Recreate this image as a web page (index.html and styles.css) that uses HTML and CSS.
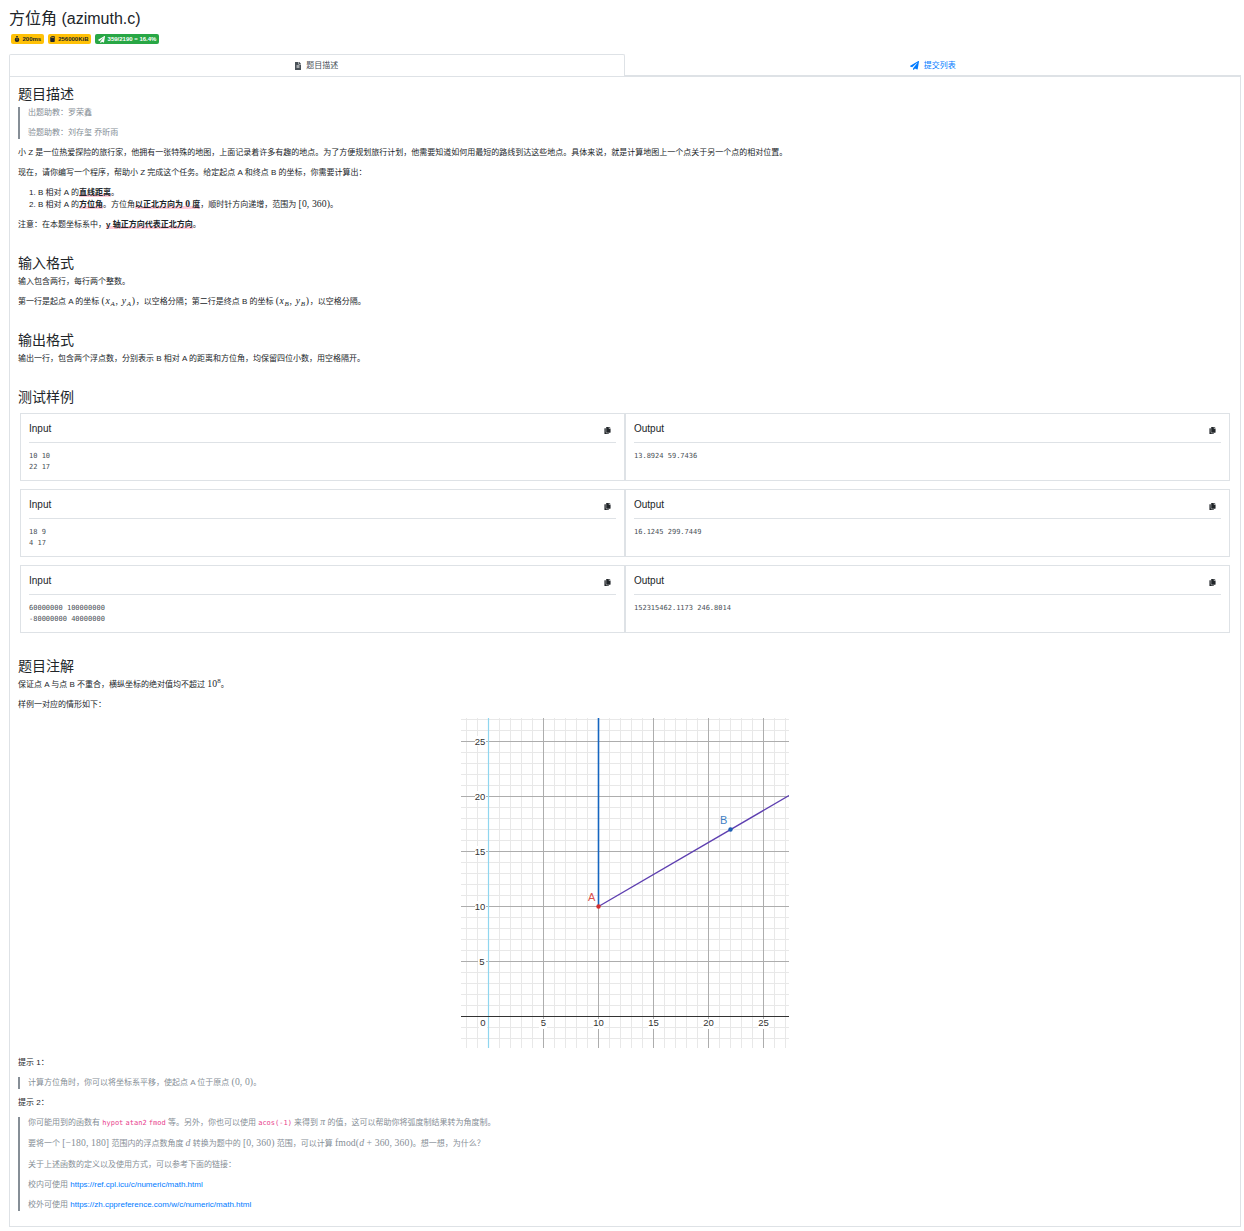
FILE: index.html
```html
<!DOCTYPE html>
<html lang="en">
<head>
  <meta charset="UTF-8" />
  <title>方位角 (azimuth.c)</title>
  <link rel="stylesheet" href="styles.css">
</head>
<body>
  <svg class="icon-defs" width="0" height="0">
    <symbol id="i-plane" viewBox="0 0 512 512"><path d="M476 3.2L12.5 270.6c-18.1 10.4-15.8 35.6 2.2 43.2L121 358.4l287.3-253.2c5.5-4.9 13.3 2.6 8.6 8.3L176 407v80.5c0 23.6 28.5 32.9 42.5 15.8L282 426l124.6 52.2c14.2 6 30.4-2.9 33-18.2l72-432C515 7.8 493.3-6.8 476 3.2z"/></symbol>
    <symbol id="i-copy" viewBox="0 0 448 512"><path d="M320 448v40c0 13.255-10.745 24-24 24H24c-13.255 0-24-10.745-24-24V120c0-13.255 10.745-24 24-24h72v296c0 30.879 25.121 56 56 56h168zm0-344V0H152c-13.255 0-24 10.745-24 24v368c0 13.255 10.745 24 24 24h272c13.255 0 24-10.745 24-24V128H344c-13.2 0-24-10.8-24-24zm120.971-31.029L375.029 7.029A24 24 0 0 0 358.059 0H352v96h96v-6.059a24 24 0 0 0-7.029-16.97z"/></symbol>
    <symbol id="i-file" viewBox="0 0 384 512"><path d="M224 136V0H24C10.7 0 0 10.7 0 24v464c0 13.3 10.7 24 24 24h336c13.3 0 24-10.7 24-24V160H248c-13.2 0-24-10.8-24-24zm64 236c0 6.6-5.4 12-12 12H108c-6.6 0-12-5.4-12-12v-8c0-6.6 5.4-12 12-12h168c6.6 0 12 5.4 12 12v8zm0-64c0 6.6-5.4 12-12 12H108c-6.6 0-12-5.4-12-12v-8c0-6.6 5.4-12 12-12h168c6.6 0 12 5.4 12 12v8zm0-72v8c0 6.6-5.4 12-12 12H108c-6.6 0-12-5.4-12-12v-8c0-6.6 5.4-12 12-12h168c6.6 0 12 5.4 12 12zm96-114.1v6.1H256V0h6.1c6.4 0 12.5 2.5 17 7l97.9 98c4.5 4.5 7 10.6 7 16.9z"/></symbol>
    <symbol id="i-watch" viewBox="0 0 448 512"><path d="M224 120a196 196 0 1 0 0 392 196 196 0 0 0 0-392zm24 226a24 24 0 0 1-48 0V220a24 24 0 0 1 48 0zM160 0h128a24 24 0 0 1 24 24v24a24 24 0 0 1-24 24h-32v32h-64V72h-32a24 24 0 0 1-24-24V24a24 24 0 0 1 24-24z"/></symbol>
    <symbol id="i-card" viewBox="0 0 384 512"><path d="M320 0H128L0 128v320c0 35.300 28.700 64 64 64h256c35.300 0 64-28.700 64-64V64c0-35.300-28.700-64-64-64zM160 160h-48V64h48zm80 0h-48V64h48zm80 0h-48V64h48z"/></symbol>
  </svg>

  <div class="page">
    <h1 class="title">方位角 (azimuth.c)</h1>
    <div class="badges">
      <span class="badge badge-warn"><svg class="ic ic-watch"><use href="#i-watch"/></svg>200ms</span>
      <span class="badge badge-warn"><svg class="ic ic-card"><use href="#i-card"/></svg>256000KiB</span>
      <span class="badge badge-ok"><svg class="ic ic-plane"><use href="#i-plane"/></svg>359/2190 = 16.4%</span>
    </div>

    <div class="tabs">
      <div class="tab tab-active"><svg class="ic"><use href="#i-file"/></svg>题目描述</div>
      <div class="tab tab-link"><svg class="ic"><use href="#i-plane"/></svg>提交列表</div>
    </div>

    <div class="panel">
      <section class="sec sec-first">
        <h2>题目描述</h2>
        <blockquote>
          <p>出题助教：罗荣鑫</p>
          <p>验题助教：刘存玺 乔昕雨</p>
        </blockquote>
        <p>小 Z 是一位热爱探险的旅行家，他拥有一张特殊的地图，上面记录着许多有趣的地点。为了方便规划旅行计划，他需要知道如何用最短的路线到达这些地点。具体来说，就是计算地图上一个点关于另一个点的相对位置。</p>
        <p>现在，请你编写一个程序，帮助小 Z 完成这个任务。给定起点 A 和终点 B 的坐标，你需要计算出：</p>
        <ol>
          <li>B 相对 A 的<strong class="hl">直线距离</strong>。</li>
          <li>B 相对 A 的<strong class="hl">方位角</strong>。方位角<strong class="hl">以正北方向为 <span class="math">0</span> 度</strong>，顺时针方向递增，范围为 <span class="math">[0, 360)</span>。</li>
        </ol>
        <p>注意：在本题坐标系中，<strong class="hl">y 轴正方向代表正北方向</strong>。</p>
      </section>

      <section class="sec">
        <h2>输入格式</h2>
        <p>输入包含两行，每行两个整数。</p>
        <p>第一行是起点 A 的坐标 <span class="math math-wide">(<i>x<sub>A</sub></i>, <i>y<sub>A</sub></i>)</span>，以空格分隔；第二行是终点 B 的坐标 <span class="math math-wide">(<i>x<sub>B</sub></i>, <i>y<sub>B</sub></i>)</span>，以空格分隔。</p>
      </section>

      <section class="sec">
        <h2>输出格式</h2>
        <p>输出一行，包含两个浮点数，分别表示 B 相对 A 的距离和方位角，均保留四位小数，用空格隔开。</p>
      </section>

      <section class="sec">
        <h2>测试样例</h2>
        <div class="samples">
          <div class="sample-row">
            <div class="sample">
              <div class="sample-head">Input<svg class="ic-copy"><use href="#i-copy"/></svg></div>
              <pre>10 10
22 17</pre>
            </div>
            <div class="sample">
              <div class="sample-head">Output<svg class="ic-copy"><use href="#i-copy"/></svg></div>
              <pre>13.8924 59.7436</pre>
            </div>
          </div>
          <div class="sample-row">
            <div class="sample">
              <div class="sample-head">Input<svg class="ic-copy"><use href="#i-copy"/></svg></div>
              <pre>18 9
4 17</pre>
            </div>
            <div class="sample">
              <div class="sample-head">Output<svg class="ic-copy"><use href="#i-copy"/></svg></div>
              <pre>16.1245 299.7449</pre>
            </div>
          </div>
          <div class="sample-row">
            <div class="sample">
              <div class="sample-head">Input<svg class="ic-copy"><use href="#i-copy"/></svg></div>
              <pre>60000000 100000000
-80000000 40000000</pre>
            </div>
            <div class="sample">
              <div class="sample-head">Output<svg class="ic-copy"><use href="#i-copy"/></svg></div>
              <pre>152315462.1173 246.8014</pre>
            </div>
          </div>
        </div>
      </section>

      <section class="sec sec-notes">
        <h2>题目注解</h2>
        <p>保证点 A 与点 B 不重合，横纵坐标的绝对值均不超过 <span class="math">10<sup>8</sup></span>。</p>
        <p>样例一对应的情形如下：</p>
        <div class="figure">
          <svg class="plot" width="328" height="330" viewBox="0 0 328 330">
            <defs>
              <pattern id="minor" width="11" height="11" x="27" y="298" patternUnits="userSpaceOnUse">
                <path d="M.5 0V11M0 .5H11" stroke="#e8e8e8" fill="none"/>
              </pattern>
              <pattern id="major" width="55" height="55" x="27" y="298" patternUnits="userSpaceOnUse">
                <path d="M.5 0V55M0 .5H55" stroke="#adadad" fill="none"/>
              </pattern>
            </defs>
            <rect width="328" height="330" fill="url(#minor)"/>
            <rect width="328" height="330" fill="url(#major)"/>
            <path d="M27.500 0V330" stroke="#8fd6ef" stroke-width="1.200"/>
            <path d="M0 298.500H328" stroke="#333" stroke-width="1.200"/>
            <g class="tick-bg">
              <rect x="14" y="18" width="11" height="10"/>
              <rect x="14" y="73" width="11" height="10"/>
              <rect x="14" y="128" width="11" height="10"/>
              <rect x="14" y="183" width="11" height="10"/>
              <rect x="17" y="238" width="8" height="10"/>
              <rect x="18" y="301" width="8" height="10"/>
              <rect x="78" y="301" width="8" height="10"/>
              <rect x="132" y="301" width="11" height="10"/>
              <rect x="187" y="301" width="11" height="10"/>
              <rect x="242" y="301" width="11" height="10"/>
              <rect x="297" y="301" width="11" height="10"/>
            </g>
            <g class="ticks">
              <text x="19" y="26.500">25</text>
              <text x="19" y="81.500">20</text>
              <text x="19" y="136.500">15</text>
              <text x="19" y="191.500">10</text>
              <text x="21" y="246.500">5</text>
              <text x="22" y="307.500">0</text>
              <text x="82.500" y="307.500">5</text>
              <text x="137.500" y="307.500">10</text>
              <text x="192.500" y="307.500">15</text>
              <text x="247.500" y="307.500">20</text>
              <text x="302.500" y="307.500">25</text>
            </g>
            <path d="M137.500 0V188.500" stroke="#1565c0" stroke-width="1.600"/>
            <path d="M137.500 188.500L328 77.500" stroke="#5e3fb0" stroke-width="1.400"/>
            <circle cx="137.500" cy="188.500" r="2.200" fill="#d32f2f"/>
            <circle cx="269.500" cy="111.500" r="2.200" fill="#1e5fb4"/>
            <text class="pt pt-a" x="127" y="183">A</text>
            <text class="pt pt-b" x="259" y="106">B</text>
          </svg>
        </div>
        <p>提示 1：</p>
        <blockquote>
          <p>计算方位角时，你可以将坐标系平移，使起点 A 位于原点 <span class="math">(0, 0)</span>。</p>
        </blockquote>
        <p>提示 2：</p>
        <blockquote>
          <p class="line-tall">你可能用到的函数有 <code>hypot</code> <code>atan2</code> <code>fmod</code> 等。另外，你也可以使用 <code>acos(-1)</code> 来得到 <span class="math"><i>π</i></span> 的值，这可以帮助你将弧度制结果转为角度制。</p>
          <p class="line-tall">要将一个 <span class="math">[−180, 180]</span> 范围内的浮点数角度 <span class="math"><i>d</i></span> 转换为题中的 <span class="math">[0, 360)</span> 范围，可以计算 <span class="math">fmod(<i>d</i> + 360, 360)</span>。想一想，为什么？</p>
          <p>关于上述函数的定义以及使用方式，可以参考下面的链接：</p>
          <p>校内可使用 <a href="#">https://ref.cpl.icu/c/numeric/math.html</a></p>
          <p>校外可使用 <a href="#">https://zh.cppreference.com/w/c/numeric/math.html</a></p>
        </blockquote>
      </section>
    </div>
  </div>
</body>
</html>
```

FILE: styles.css
```css
body {
  margin: 0;
  background: #fff;
  color: #212529;
  font-family: "Liberation Sans", "Noto Sans CJK SC", sans-serif;
  font-size: 8px;
  line-height: 12px;
}

.icon-defs {
  display: block;
  height: 0;
}

.page {
  width: 1232px;
  margin-left: 9px;
  padding: 9px 0 4px;
}

.title {
  margin: 0;
  font-size: 16px;
  font-weight: 400;
  line-height: 19px;
}

.badges {
  display: flex;
  gap: 4px;
  margin: 6px 0 10px 2px;
}

.badge {
  display: flex;
  align-items: center;
  height: 10px;
  padding: 0 2.500px;
  border-radius: 2px;
  font-size: 6px;
  font-weight: 700;
  line-height: 10px;
}

.badge .ic {
  height: 6px;
  margin: 0 3px 0 0;
  fill: currentColor;
}

.badge .ic-watch {
  width: 6px;
}

.badge .ic-card {
  width: 5px;
}

.badge .ic-plane {
  width: 7px;
  height: 7px;
}

.badge-warn {
  background: #ffc107;
}

.badge-ok {
  background: #28a745;
  color: #fff;
}

.tabs {
  display: flex;
  height: 22px;
}

.tab {
  flex: 1;
  display: flex;
  align-items: center;
  justify-content: center;
  font-size: 8px;
}

.tab .ic {
  width: 6px;
  height: 8px;
  margin-right: 5px;
  fill: currentColor;
}

.tab-active {
  flex: 0 0 613.500px;
  border: 1px solid #dee2e6;
  border-bottom: 0;
  border-radius: 2px 2px 0 0;
  color: #495057;
}

.tab-link {
  padding-top: 2px;
  border-bottom: 1px solid #dee2e6;
  color: #007bff;
}

.tab-link .ic {
  width: 9px;
  height: 9px;
}

.panel {
  padding: 9px 8px 7px;
  border: 1px solid #dee2e6;
}

.sec {
  margin-top: 24px;
}

.sec-first {
  margin-top: 0;
}

.sec-notes {
  margin-top: 25px;
}

h2 {
  margin: 0 0 4px;
  font-size: 14px;
  font-weight: 400;
  line-height: 17px;
}

p {
  margin: 0 0 8px;
}

.line-tall {
  min-height: 13px;
}

blockquote {
  margin: 0 0 8px;
  padding-left: 8px;
  border-left: 2px solid #868e96;
  color: #868e96;
}

blockquote p:last-child {
  margin-bottom: 0;
}

ol {
  margin: 0 0 8px;
  padding-left: 20px;
}

.hl {
  font-weight: 700;
  background: linear-gradient(transparent 72%, #ffccd8 72%);
}

.math {
  font-family: "Liberation Serif", "Noto Sans CJK SC", serif;
  font-size: 9.700px;
  line-height: 0;
  letter-spacing: 0.100px;
}

.math-wide {
  letter-spacing: 0.700px;
}

.math sub,
.math sup {
  font-size: 7px;
  line-height: 0;
}

.math sub {
  vertical-align: -2px;
}

code {
  color: #e83e8c;
  font-family: "DejaVu Sans Mono", monospace;
  font-size: 7px;
  line-height: 0;
}

a {
  color: #007bff;
  text-decoration: none;
}

.samples {
  margin-bottom: 8px;
  padding: 3px 2px 0;
}

.sample-row {
  display: flex;
  margin-bottom: 8px;
}

.sample-row:last-child {
  margin-bottom: 0;
}

.sample {
  flex: 1;
  min-width: 0;
  padding: 8px 8px 7px;
  border: 1px solid #dee2e6;
}

.sample-head {
  display: flex;
  justify-content: space-between;
  padding-bottom: 7px;
  border-bottom: 1px solid #dee2e6;
  font-size: 10px;
  line-height: 13px;
}

.ic-copy {
  width: 7px;
  height: 7px;
  margin: 5px 5px 0 0;
  fill: #212529;
}

pre {
  margin: 8px 0 0;
  min-height: 22px;
  color: #495057;
  font-family: "DejaVu Sans Mono", monospace;
  font-size: 7px;
  line-height: 11px;
}

.figure {
  display: flex;
  justify-content: center;
  margin: -1px 0 9px;
}

.plot {
  display: block;
}

.tick-bg {
  fill: #fff;
}

.ticks {
  fill: #333;
  font-size: 9.500px;
  text-anchor: middle;
}

.pt {
  font-size: 11px;
}

.pt-a {
  fill: #d9534f;
}

.pt-b {
  fill: #3f7fc4;
}
```
